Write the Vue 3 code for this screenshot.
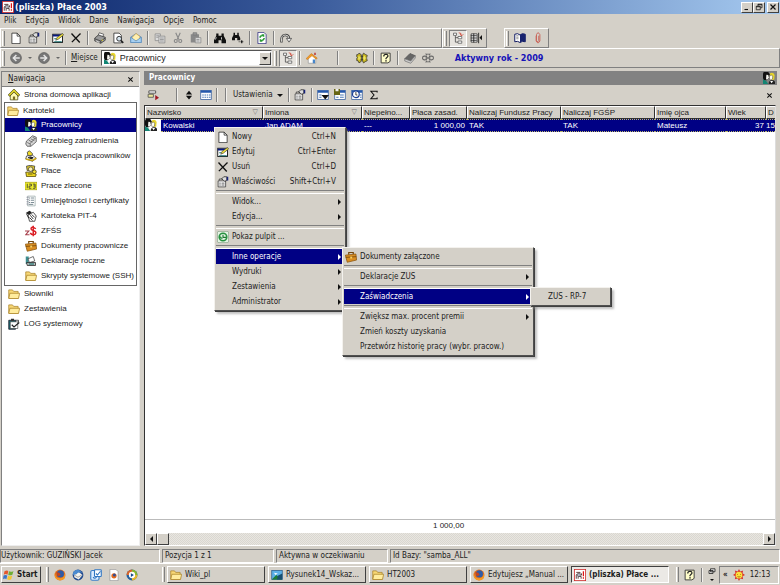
<script setup>
import { ref } from 'vue'

const icons = {
  app: '<rect x=".5" y=".5" width="15" height="15" fill="#fff" stroke="#c22"/><path d="M3 4.500h5l2 2v2M3 13V8l2-2M5.500 13v-3h4v3" fill="none" stroke="#533" stroke-width="1.200"/><circle cx="6.500" cy="8" r="2.200" fill="#b5b5c4" stroke="#444" stroke-width=".8"/><path d="M12.500 3v6.500M12.500 11v2" stroke="#d11" stroke-width="1.600"/>',
  page: '<path d="M2.500 1.500h7l4 4v10h-11z" fill="#fff" stroke="#222"/><path d="M9.500 1.500v4h4" fill="none" stroke="#222"/>',
  props: '<path d="M1.500 6.500h10v8h-10z" fill="#fff" stroke="#333"/><path d="M3 9.500h2M6 9.500h4M3 12h2M6 12h4M3 6V4h5" stroke="#333" fill="none"/><path d="M6 4l3-3h4v5l-3 1-2-2z" fill="#ddd" stroke="#222"/><path d="M13 1h2v5h-2z" fill="#14207a"/>',
  edit: '<rect x="1" y="3" width="13" height="11" fill="#fff" stroke="#111" stroke-width="1.200"/><path d="M1 3.500h13v2.500H1z" fill="#0a1a80"/><path d="M3 13h10M3 9h3" stroke="#197070" stroke-width="1.500"/><path d="M5 11l2-4 7-5 1.500 2-7 5.500z" fill="#f1e23c" stroke="#333" stroke-width=".8"/>',
  del: '<path d="M2 2l11 12M14 2L2.500 13.500" stroke="#111" stroke-width="1.800" fill="none"/>',
  print: '<path d="M5 6l2-5 6 2-2 5z" fill="#fff" stroke="#444"/><path d="M1 8l5-4 9 3v4l-6 4-8-3z" fill="#9a9a9a" stroke="#333"/><path d="M1 9l8 3 6-4M9 12v3" stroke="#333" fill="none"/><path d="M3 12l4 2" stroke="#fff"/><circle cx="11" cy="11" r="1" fill="#e5d636"/>',
  preview: '<path d="M2.500 1.500h7l3 3v10h-10z" fill="#fff" stroke="#222"/><circle cx="9.500" cy="9" r="3.200" fill="#d5e4ee" stroke="#222" stroke-width="1.200"/><path d="M12 11.500l3 3" stroke="#222" stroke-width="2.200"/>',
  mail: '<path d="M1 7l7-5 7 5v7H1z" fill="#6ea4d8" stroke="#5280ae"/><path d="M3 7l5-5 5 4v4l-5 2-5-2z" fill="#fff0b0" stroke="#e0ad4c"/><path d="M1 7l7 5 7-5v7H1z" fill="#a7d0f2" stroke="#5f90bd"/>',
  copy: '<g fill="#ddd" stroke="#888"><path d="M1.500 2.500h7v9h-7z"/><path d="M6.500 5.500h8v9h-8z"/></g><path d="M3 5h4M3 7h3M8 8h5M8 10h5M8 12h5" stroke="#888"/>',
  cut: '<path d="M5 1l4 9M11 1L7 10" stroke="#888" stroke-width="1.500"/><g fill="none" stroke="#888" stroke-width="1.500"><circle cx="5" cy="12" r="2"/><circle cx="11" cy="12" r="2"/></g>',
  paste: '<path d="M1 3h11v11H1z" fill="#888"/><path d="M4 1h5v3H4z" fill="#999" stroke="#777"/><path d="M7 7.500h7.500v7H7z" fill="#ddd" stroke="#888"/><path d="M8.500 10h4M8.500 12h4" stroke="#888"/>',
  bino: '<path d="M3 2h3v3h4V2h3v3l3 6v4h-6v-4H6v4H0v-4l3-6z" fill="#111"/><path d="M3 7l-1 3M10 7v3" stroke="#fff"/>',
  binonext: '<path d="M2 1h2v3h3V1h2v3l2 4v3H7V8H4v3H0V8l2-4z" fill="#111"/><path d="M9 13h1M11.500 13h1M14 13h1M13 11v4" stroke="#111" stroke-width="1.500"/>',
  refresh: '<path d="M2.500 .5h8l3 3v12h-11z" fill="#fff" stroke="#227"/><path d="M4 7q1-3 4-3l-1-1h4v4L9.500 6Q7 5 6 8zM12 8q-1 4-4 4l1 1H5V9l1.500 1Q9 11 10 8z" fill="#2a9b35"/>',
  redo: '<path d="M2 14q-1-10 5-10 5 0 5 5" stroke="#444" stroke-width="3.200" fill="none"/><path d="M2 13q-1-9 5-9 5 0 5 5" stroke="#e8e6e1" stroke-width="1.200" fill="none"/><path d="M8.500 8.500h7l-3.500 5z" fill="#eee" stroke="#444"/>',
  tree: '<path d="M4.500 3v10.500H8M4.500 7.500H9" fill="none" stroke="#444"/><g fill="#fff" stroke="#555"><path d="M2 1.500h4v3H2zM8 6h5v3H8zM8 12h5v3H8z"/></g><path d="M9 1l3 1v3M11 3l2 2 2-2" stroke="#c32" fill="none"/>',
  cols: '<path d="M1.500 2.500h8v11h-8z" fill="#fff" stroke="#222"/><path d="M1 5h8M1 8h8M1 11h8M5 2v12M11.500 1v14" stroke="#222" stroke-width="1.200"/><path d="M16 4v7l-3.500-3.500z" fill="#111"/>',
  book: '<path d="M8 4Q5 1 1 3v10q4-1.500 7 1 3-2.500 7-1V3q-4-2-7 1z" fill="#fff" stroke="#0b1560" stroke-width="1.300"/><path d="M8 4q3-3 7-1v10q-4-1.500-7 1z" fill="#18236e"/><path d="M3 5h3M3 7h3M3 9h3" stroke="#777"/>',
  clip: '<path d="M5.500 5v7q2.500 5 5 0V3.500q-2.500-5-4.500 0v8q2 3 3 0V5" fill="none" stroke="#c8665a" stroke-width="1.300"/>',
  back: '<circle cx="8" cy="8" r="7.200" fill="#777" stroke="#5f5f5f"/><path d="M13 8H5M8.500 4L4.500 8l4 4" stroke="#e5e5e5" stroke-width="2" fill="none"/>',
  fwd: '<circle cx="8" cy="8" r="7.200" fill="#777" stroke="#5f5f5f"/><path d="M3 8h8M7.500 4l4 4-4 4" stroke="#e5e5e5" stroke-width="2" fill="none"/>',
  house: '<path d="M3 8v7h10V8L8 3z" fill="#fff" stroke="#999"/><path d="M0 9l7-7 8 6-1.500 1.500L8 5l-6 5z" fill="#f49b27" stroke="#b86a10" stroke-width=".6"/><path d="M9 10h3v5H9z" fill="#4786c9"/><path d="M11 1h2v3h-2z" fill="#b33"/>',
  bearing: '<g fill="#c4b21c" stroke="#333"><path d="M4 1.500l3 2v9l-3 2-1.500-3H1v-3l1-1-1-1v-3h1.500z"/><path d="M10 1.500l3 2 2 1-1 3.500 1 3.500-2 1-3 2-1.500-3v-7z"/></g><path d="M3 8h11M4 5v6M11 5v6" stroke="#f6ee71" stroke-width="1.300"/><path d="M8 5v6" stroke="#222" stroke-width="1.400"/>',
  help: '<path d="M1.500 1.500h12v11l-3 2h-9z" fill="#fffdc9" stroke="#333" stroke-width="1.200"/><path d="M5 6q0-3 3-3 3 .2 2.500 3L8 8.500v1" stroke="#222" stroke-width="1.600" fill="none"/><path d="M7 11h2v1.800H7z" fill="#222"/>',
  graybook: '<path d="M1 9l7-7 7 3-6 7z" fill="#666" stroke="#555"/><path d="M1 9l8 3 6-7v3l-6 7-8-3z" fill="#ccc" stroke="#777"/>',
  chain: '<g fill="none" stroke="#666" stroke-width="1.400"><rect x=".7" y="5.500" width="6" height="5" rx="2.500"/><rect x="9.300" y="5.500" width="6" height="5" rx="2.500"/><path d="M4.500 8h7M5 2l1.500 2.500M11 2L9.500 4.500M8 2v2M5 14l1.500-2.500M11 14l-1.500-2.500M8 14v-2"/></g>',
  people: '<path d="M1 0h6l2 3-1 5-3 3H1L0 8V2z" fill="#111"/><path d="M4.500 3.500L7 4l.8 3-1.300 2.500-2.500.5z" fill="#f4f4ee"/><path d="M0 10l4 1.500 3 4.500H0z" fill="#138573"/><path d="M9.500 1.500Q14 0 15.500 4l-.5 6-3 1-3-6z" fill="#e6d52d"/><path d="M9 4.500q3-1 4 1l-.5 4-2.500 1.500-1.500-3z" fill="#fffef0" stroke="#333" stroke-width=".6"/><path d="M7.500 16q0-4 3.500-5h3l2 2v3z" fill="#222"/><path d="M9.500 12l2 3 2-3z" fill="#fff"/>',
  yhouse: '<path d="M3 8v6.500h10V8L8 3z" fill="#fffbb5" stroke="#4d4a10"/><path d="M1 9l7-7 7 7" fill="none" stroke="#4d4a10" stroke-width="3.400"/><path d="M1.500 8.500L8 2l6.500 6.500" fill="none" stroke="#f3e62d" stroke-width="1.800"/><path d="M6.500 10h3v4.500h-3z" fill="#7a6e21"/>',
  folder: '<path d="M1 2.500h5l1.500 2h6v9H1z" fill="#f8d876" stroke="#a98225"/><path d="M1 14l1.500-7H15.500L14 14z" fill="#ffec9e" stroke="#a98225"/>',
  phone: '<path d="M1 12l1-4 8-7 5 2v6l-7 6H3z" fill="#d8d8d8" stroke="#444"/><path d="M5 7l5 2.500M7.500 5l5 2.500M3 10l4 2M10 3l4 2M7 15V11l7-7" stroke="#555" fill="none"/>',
  attend: '<path d="M3 3l3-2 4 4-1 4-5-1z" fill="#f0da29" stroke="#333"/><path d="M2 8l8-1 5 4-5 4-9-3z" fill="#fff" stroke="#333"/><path d="M4 10l6 2M6 9l5 1.500" stroke="#111" stroke-width="1.500"/><path d="M1 12l9 2 5-3" stroke="#caa715" stroke-width="2" fill="none"/>',
  money: '<path d="M2 1.500l5-1 6 1-1 6H3z" fill="#e0ca2a" stroke="#333"/><circle cx="7.500" cy="5.500" r="3" fill="#fff3b0" stroke="#444"/><path d="M1 9.500h9l5 3-1 3H2z" fill="#ebd51f" stroke="#403809"/><path d="M4 12h6" stroke="#403809"/><circle cx="12.500" cy="9" r="2.500" fill="#f6e337" stroke="#403809"/>',
  onetwo: '<rect x="0" y="3" width="16" height="10" fill="#f1f02c" stroke="#a7a015"/><path d="M3 5v6M5.500 5.500h3V8h-3v3h3M10.500 5.500h3V11h-3M11 8h2.500" stroke="#333" stroke-width="1.100" fill="none"/>',
  cert: '<path d="M3.500 1.500h10v13h-10z" fill="#fff" stroke="#9aa"/><path d="M5 4h2M8 4h4M5 7h2M8 7h4M5 10h2M8 10h4M5 12.500h6" stroke="#6d8089" stroke-width="1.200"/><path d="M2 3h3M2 6h3M2 9h3M2 12h3" stroke="#889"/>',
  pit: '<path d="M1 4l5-3 3 2-3 4z" fill="#222"/><path d="M4 7l7-4 4 5-2 7H6z" fill="#fff" stroke="#222"/><path d="M7 7l4 5M9 6l4 4M6 10l4 4M2 5l3 6" stroke="#222" stroke-width="1.200"/>',
  dollar: '<path d="M0 8h5L1 13h5" stroke="#a8434f" stroke-width="1.600" fill="none"/><path d="M14.500 5q-6-4-6.500 0c0 3 7 2 6.500 5.500-.5 3.500-6 3-7.500 0M11 1v14" stroke="#db1f26" stroke-width="2" fill="none"/>',
  bag: '<path d="M5 5V2h6v3" fill="none" stroke="#71460b" stroke-width="1.600"/><path d="M.5 5.500l14-1.500 1 8-12.500 3z" fill="#d98d20" stroke="#8b5510"/><path d="M1 8.500l14-1" stroke="#7b4b0b" stroke-width="1.200"/><path d="M7 7.500h2.500V10H7z" fill="#f6d365"/>',
  decl: '<path d="M1 2h4v10H1z" fill="#3c8e90"/><path d="M4 5l7-3 2 6-7 2z" fill="#fff" stroke="#444"/><path d="M2 10h12v4H3z" fill="#bbb" stroke="#222"/><path d="M5 12h7" stroke="#17726f" stroke-width="1.500"/>',
  log: '<path d="M1 3h9v12H1z" fill="#1b6e75" stroke="#112"/><path d="M3 5h10v9H3z" fill="#fff" stroke="#333" stroke-width=".8"/><path d="M4 1h4v3H4z" fill="#333"/><path d="M5 9l3 3 7-6" stroke="#222" stroke-width="1.600" fill="none"/><path d="M10 3h4v3" stroke="#222" fill="none"/>',
  gridrun: '<path d="M2.500 2.500h9v3h-9z" fill="#fff" stroke="#333"/><path d="M1.500 7h7v4h-7z" fill="#efeb9b" stroke="#444"/><path d="M11 8v7l5-3.500z" fill="#a01822"/>',
  updown: '<path d="M8 1l5 6H3zM8 15L3 9h10z" fill="#111"/>',
  grid: '<rect x="1" y="2" width="14" height="12" fill="#fff" stroke="#315a9b"/><path d="M1 2h14v3H1z" fill="#2458ad"/><path d="M3 8h2M6 8h2M9 8h2M12 8h2M3 11h2M6 11h2M9 11h2M12 11h2" stroke="#4b78b5" stroke-width="1.500"/>',
  griddown: '<rect x="1" y="2" width="14" height="12" fill="#fff" stroke="#315a9b"/><path d="M1 2h14v3H1z" fill="#2458ad"/><path d="M3 8h3M3 11h3" stroke="#4b78b5" stroke-width="1.500"/><path d="M6 8h10l-5 6z" fill="#111"/>',
  gridsave: '<rect x="1" y="2" width="14" height="12" fill="#fff" stroke="#315a9b"/><path d="M6 2h9v3H6z" fill="#2458ad"/><path d="M8 8h5M8 11h5M3 11h3" stroke="#4b78b5" stroke-width="1.500"/><path d="M0 0h8v8H0z" fill="#666514"/><path d="M2 0h4v3H2z" fill="#eee"/>',
  gridlens: '<rect x="1" y="2" width="14" height="12" fill="#fff" stroke="#315a9b"/><path d="M1 2h14v3H1z" fill="#2458ad"/><path d="M12 8h2M12 11h2" stroke="#4b78b5" stroke-width="1.500"/><circle cx="6.500" cy="7" r="4.500" fill="#fff" stroke="#1d3f94" stroke-width="1.600"/><path d="M6.500 4v4h2" stroke="#111" fill="none"/>',
  sigma: '<path d="M13 4V2H3l5 6-5 6h10v-2" fill="none" stroke="#111" stroke-width="1.700"/>',
  firefox: '<circle cx="8" cy="8" r="7.300" fill="#e4701c"/><circle cx="8.500" cy="6.500" r="4.800" fill="#2f5ca8"/><path d="M1 5q1 9 9 7 4-1 4-6 3 9-6 9Q0 15 1 5z" fill="#f59a24"/><path d="M3 4l4 1 2 3-4 2z" fill="#c8441b"/>',
  bird: '<circle cx="8" cy="8" r="7.200" fill="#234a8d"/><path d="M3 7l6-3 5 4-5 6-6-3z" fill="#f3f3ee"/><path d="M1 8q0-7 8-7l5 4q-6-2-8 2z" fill="#4b8bd0"/><path d="M3 8l5 3 5-3" stroke="#888" fill="none"/>',
  outlook: '<rect x="1" y="2" width="11" height="13" rx="2" fill="#dcecff" stroke="#3c7fc8" stroke-width="1.500"/><rect x="6" y="1" width="9" height="9" rx="1" fill="#fff" stroke="#2f75c2" stroke-width="1.500"/><path d="M8 6l2 2 4-5M4 11q3 3 5-1" stroke="#2f75c2" stroke-width="1.500" fill="none"/>',
  htm: '<path d="M2.500 .5h8l3 3v12h-11z" fill="#fff" stroke="#999"/><circle cx="8" cy="9" r="3.500" fill="#e66b1c"/><circle cx="8.500" cy="8" r="2" fill="#304f99"/>',
  media: '<circle cx="8" cy="8" r="7.300" fill="#235f9e"/><path d="M8 8V.7A7.300 7.300 0 0 1 15.300 8z" fill="#86b532"/><path d="M8 8h7.300A7.300 7.300 0 0 1 8 15.300z" fill="#e9b52a"/><path d="M8 8H.7A7.300 7.300 0 0 1 8 .7z" fill="#d8652a"/><circle cx="8" cy="8" r="4.200" fill="#fff"/><path d="M6.500 5.500v5l4-2.500z" fill="#164a8a"/>',
  pic: '<rect x="1" y="2" width="14" height="12" fill="#5db1e8" stroke="#285c8a"/><path d="M1 14l6-6 8 6z" fill="#1f7d35"/><path d="M4 5l5 1-3 2z" fill="#fff"/><path d="M9 9l6-3v8H8z" fill="#184e70"/>',
  flag: '<path d="M2 3q3-2 5-.5L6 7.500Q3.500 6 1 7.500z" fill="#e4572b"/><path d="M8 3q3 1.500 6-.5L12.500 7.500Q9.500 9 7 8z" fill="#6fae35"/><path d="M.7 8.800q2.500-1.500 5 0L4.500 13.500Q2.500 12 0 13.500z" fill="#3973c6"/><path d="M6.800 9q3 1.500 5.500-.3L11 13.700q-3 1.800-5.500 0z" fill="#f3c631"/>',
  windows: '<path d="M5 1.500h9v6H5zM2 5h8v6H2z" fill="#ddd" stroke="#222" stroke-width="1.600"/>',
  sun: '<path d="M8 0l1.700 3.200L13.500 2l-.8 3.800L16 8l-3.300 1.800.8 3.900-3.800-1.100L8 16l-1.700-3.400-3.800 1.100.8-3.900L0 8l3.300-2.200L2.500 2l3.800 1.200z" fill="#d9342b"/><circle cx="8" cy="8" r="4.500" fill="#fae13b"/><path d="M6 7v1M10 7v1M6 10q2 1.500 4 0" stroke="#9b4812" fill="none"/>',
  desk: '<rect x=".5" y=".5" width="15" height="15" rx="2" fill="#e5f3e5" stroke="#8aa58a"/><circle cx="8" cy="8" r="5" fill="none" stroke="#289240" stroke-width="2.200"/><path d="M8 5v3.500h4" stroke="#207733" stroke-width="1.500" fill="none"/><path d="M2 9l3-2 3 4z" fill="#289240"/>',
  min: '<path d="M3 13h7" stroke="#111" stroke-width="2.200"/>',
  restore: '<path d="M6 2.500h8v7h-3M6 2v4M2.500 6.500h8v7h-8zM6 3.500h8M2.500 7.500h8" fill="none" stroke="#111" stroke-width="1.500"/>',
  close: '<path d="M3 3l10 10M13 3L3 13" stroke="#111" stroke-width="2.400"/>'
}

const menus = ['Plik', 'Edycja', 'Widok', 'Dane', 'Nawigacja', 'Opcje', 'Pomoc']

const mainTools = [
  ['page', 'Nowy'], ['props', 'Właściwości'], null,
  ['edit', 'Edytuj'], ['del', 'Usuń'], null,
  ['print', 'Drukuj'], ['preview', 'Podgląd'], ['mail', 'Wyślij'], null,
  ['copy', 'Kopiuj'], ['cut', 'Wytnij'], ['paste', 'Wklej'], null,
  ['bino', 'Szukaj'], ['binonext', 'Szukaj dalej'], null,
  ['refresh', 'Odśwież'], null, ['redo', 'Ponów']
]

const files = [
  ['people', 'Pracownicy'], ['phone', 'Przebieg zatrudnienia'], ['attend', 'Frekwencja pracowników'],
  ['money', 'Płace'], ['onetwo', 'Prace zlecone'], ['cert', 'Umiejętności i certyfikaty'],
  ['pit', 'Kartoteka PIT-4'], ['dollar', 'ZFŚS'], ['bag', 'Dokumenty pracownicze'],
  ['decl', 'Deklaracje roczne'], ['folder', 'Skrypty systemowe (SSH)']
]
const tail = [['folder', 'Słowniki'], ['folder', 'Zestawienia'], ['log', 'LOG systemowy']]

const columns = [
  { t: 'Nazwisko', w: 118, sort: true }, { t: 'Imiona', w: 99, sort: true }, { t: 'Niepełno...', w: 48 },
  { t: 'Płaca zasad.', w: 57 }, { t: 'Naliczaj Fundusz Pracy', w: 94 }, { t: 'Naliczaj FGŚP', w: 94 },
  { t: 'Imię ojca', w: 71 }, { t: 'Wiek', w: 40 }, { t: 'D' }
]

const tasks = [
  ['folder', 'Wiki_pl'], ['pic', 'Rysunek14_Wskaz...'], ['folder', 'HT2003'],
  ['firefox', 'Edytujesz „Manual ...'], ['app', '(pliszka)  Płace ...']
]

const place = ref('Pracownicy')
const current = ref('Pracownicy')
</script>

<template>
  <div class="window">
    <header class="title">
      <svg class="ic" viewBox="0 0 16 16" v-html="icons.app" />
      <h1>(pliszka) Płace 2003</h1>
      <button class="cap" aria-label="Minimalizuj"><svg viewBox="0 0 16 16" v-html="icons.min" /></button>
      <button class="cap" aria-label="Przywróć"><svg viewBox="0 0 16 16" v-html="icons.restore" /></button>
      <button class="cap last" aria-label="Zamknij"><svg viewBox="0 0 16 16" v-html="icons.close" /></button>
    </header>

    <nav class="menubar">
      <button v-for="m in menus" :key="m">{{ m }}</button>
    </nav>

    <div class="toolrow">
      <div class="bar wide">
        <i class="grip" />
        <template v-for="(t, i) in mainTools" :key="i">
          <button v-if="t" class="tool" :aria-label="t[1]"><svg class="ic" viewBox="0 0 16 16" v-html="icons[t[0]]" /></button>
          <i v-else class="sep" />
        </template>
      </div>
      <div class="bar">
        <i class="grip" />
        <button class="tool on" aria-label="Drzewo"><svg class="ic" viewBox="0 0 16 16" v-html="icons.tree" /></button>
        <button class="tool" aria-label="Kolumny"><svg class="ic" viewBox="0 0 16 16" v-html="icons.cols" /></button>
      </div>
      <div class="bar apart">
        <i class="grip" />
        <button class="tool" aria-label="Książka"><svg class="ic" viewBox="0 0 16 16" v-html="icons.book" /></button>
        <button class="tool" aria-label="Załącznik"><svg class="ic" viewBox="0 0 16 16" v-html="icons.clip" /></button>
      </div>
    </div>

    <div class="toolrow">
      <div class="bar full">
        <i class="grip" />
        <button class="tool" aria-label="Wstecz"><svg class="ic" viewBox="0 0 16 16" v-html="icons.back" /></button>
        <i class="drop" />
        <button class="tool" aria-label="Dalej"><svg class="ic" viewBox="0 0 16 16" v-html="icons.fwd" /></button>
        <i class="drop" />
        <i class="sep" />
        <label for="place"><u>M</u>iejsce</label>
        <div class="combo">
          <svg class="ic" viewBox="0 0 16 16" v-html="icons.people" />
          <select id="place" v-model="place"><option>Pracownicy</option></select>
          <span class="combo-btn"><i class="down" /></span>
        </div>
        <i class="grip" />
        <button class="tool on" aria-label="Drzewo nawigacji"><svg class="ic" viewBox="0 0 16 16" v-html="icons.tree" /></button>
        <i class="sep" />
        <button class="tool" aria-label="Strona domowa"><svg class="ic" viewBox="0 0 16 16" v-html="icons.house" /></button>
        <i class="sep broad" />
        <button class="tool" aria-label="Wyszukaj"><svg class="ic" viewBox="0 0 16 16" v-html="icons.bearing" /></button>
        <i class="sep" />
        <button class="tool" aria-label="Pomoc"><svg class="ic" viewBox="0 0 16 16" v-html="icons.help" /></button>
        <i class="sep" />
        <button class="tool" aria-label="Słownik"><svg class="ic" viewBox="0 0 16 16" v-html="icons.graybook" /></button>
        <button class="tool" aria-label="Powiązania"><svg class="ic" viewBox="0 0 16 16" v-html="icons.chain" /></button>
        <strong class="year">Aktywny rok - 2009</strong>
      </div>
    </div>

    <main class="work">
      <aside class="side">
        <div class="side-head">
          <h2><u>N</u>awigacja</h2>
          <button class="x" aria-label="Zamknij nawigację"><svg viewBox="0 0 16 16" v-html="icons.close" /></button>
        </div>
        <div class="tree">
          <a href="#" class="node"><svg class="ic" viewBox="0 0 16 16" v-html="icons.yhouse" />Strona domowa aplikacji</a>
          <div class="group">
            <a href="#" class="node"><svg class="ic" viewBox="0 0 16 16" v-html="icons.folder" />Kartoteki</a>
            <a v-for="f in files" :key="f[1]" href="#" class="node child" :class="{ sel: f[1] === current }" @click.prevent="current = f[1]">
              <svg class="ic" viewBox="0 0 16 16" v-html="icons[f[0]]" />{{ f[1] }}
            </a>
          </div>
          <a v-for="f in tail" :key="f[1]" href="#" class="node"><svg class="ic" viewBox="0 0 16 16" v-html="icons[f[0]]" />{{ f[1] }}</a>
        </div>
      </aside>

      <section class="content">
        <div class="content-head">
          <h2>Pracownicy</h2>
          <svg class="ic" viewBox="0 0 16 16" v-html="icons.people" />
        </div>
        <div class="content-tools">
          <button class="tool" aria-label="Wykonaj"><svg class="ic" viewBox="0 0 16 16" v-html="icons.gridrun" /></button>
          <i class="sep far" />
          <button class="tool" aria-label="Sortuj"><svg class="ic slim" viewBox="0 0 16 16" v-html="icons.updown" /></button>
          <button class="tool" aria-label="Tabela"><svg class="ic" viewBox="0 0 16 16" v-html="icons.grid" /></button>
          <i class="sep" /><i class="sep second-sep" />
          <button class="settings">Ustawienia <i class="down" /></button>
          <i class="sep" />
          <button class="tool" aria-label="Właściwości"><svg class="ic" viewBox="0 0 16 16" v-html="icons.props" /></button>
          <i class="sep" />
          <button class="tool" aria-label="Widok tabeli"><svg class="ic" viewBox="0 0 16 16" v-html="icons.griddown" /></button>
          <button class="tool" aria-label="Zapisz widok"><svg class="ic" viewBox="0 0 16 16" v-html="icons.gridsave" /></button>
          <button class="tool" aria-label="Filtr"><svg class="ic" viewBox="0 0 16 16" v-html="icons.gridlens" /></button>
          <button class="tool" aria-label="Suma"><svg class="ic slim" viewBox="0 0 16 16" v-html="icons.sigma" /></button>
          <button class="x" aria-label="Zamknij widok"><svg viewBox="0 0 16 16" v-html="icons.close" /></button>
        </div>
        <div class="grid">
          <table>
            <colgroup><col v-for="c in columns" :key="c.t" :style="c.w ? { width: c.w + 'px' } : null"></colgroup>
            <thead>
              <tr>
                <th v-for="c in columns" :key="c.t"><div class="th">{{ c.t }}<span v-if="c.sort" class="tri">▽</span></div></th>
              </tr>
            </thead>
            <tbody>
              <tr>
                <td class="first"><div class="who"><svg class="ic" viewBox="0 0 16 16" v-html="icons.people" /><span>Kowalski</span></div></td>
                <td>Jan ADAM</td><td>---</td><td class="num">1 000,00</td><td>TAK</td><td>TAK</td><td>Mateusz</td><td class="num">37</td><td class="tight">15</td>
              </tr>
            </tbody>
          </table>
          <div class="sum">1 000,00</div>
          <div class="scroll">
            <button aria-label="Przewiń w lewo"><i class="left" /></button><i class="thumb" />
            <button class="end" aria-label="Przewiń w prawo"><i class="right" /></button>
          </div>
        </div>
      </section>
    </main>

    <footer class="status">
      <span class="p1">Użytkownik: GUZIŃSKI Jacek</span><span class="p2">Pozycja 1 z 1</span><span class="p2">Aktywna w oczekiwaniu</span><span class="p3">Id Bazy: "samba_ALL"</span>
    </footer>

    <div class="taskbar">
      <button class="start"><svg class="ic" viewBox="0 0 16 16" v-html="icons.flag" />Start</button>
      <i class="grip" />
      <div class="quick">
        <button v-for="q in ['firefox', 'bird', 'outlook', 'htm', 'media']" :key="q" class="tool" :aria-label="q"><svg class="ic" viewBox="0 0 16 16" v-html="icons[q]" /></button>
      </div>
      <i class="grip" />
      <div class="tasks">
        <button v-for="(t, i) in tasks" :key="t[1]" class="task" :class="{ active: i === 4 }"><svg class="ic" viewBox="0 0 16 16" v-html="icons[t[0]]" /><span>{{ t[1] }}</span></button>
      </div>
      <i class="grip" />
      <button class="tool" aria-label="Pomoc"><svg class="ic" viewBox="0 0 16 16" v-html="icons.help" /></button>
      <i class="sep" />
      <button class="lang" aria-label="Pasek języka"><svg viewBox="0 0 16 16" v-html="icons.windows" /><i class="down" /></button>
      <div class="tray"><b>«</b><svg class="ic" viewBox="0 0 16 16" v-html="icons.sun" /><time>12:13</time></div>
    </div>

    <ul class="menu root">
      <li><svg class="ic" viewBox="0 0 16 16" v-html="icons.page" /><button>Nowy<kbd>Ctrl+N</kbd></button></li>
      <li><svg class="ic" viewBox="0 0 16 16" v-html="icons.edit" /><button>Edytuj<kbd>Ctrl+Enter</kbd></button></li>
      <li><svg class="ic" viewBox="0 0 16 16" v-html="icons.del" /><button>Usuń<kbd>Ctrl+D</kbd></button></li>
      <li><svg class="ic" viewBox="0 0 16 16" v-html="icons.props" /><button>Właściwości<kbd>Shift+Ctrl+V</kbd></button></li>
      <li class="rule" />
      <li><button>Widok...</button><i class="right" /></li>
      <li><button>Edycja...</button><i class="right" /></li>
      <li class="rule" />
      <li><svg class="ic" viewBox="0 0 16 16" v-html="icons.desk" /><button>Pokaz pulpit ...</button></li>
      <li class="rule" />
      <li class="open">
        <button>Inne operacje</button><i class="right" />
        <ul class="menu sub second">
          <li><svg class="ic" viewBox="0 0 16 16" v-html="icons.bag" /><button>Dokumenty załączone</button></li>
          <li class="rule" />
          <li><button>Deklaracje ZUS</button><i class="right" /></li>
          <li class="rule" />
          <li class="open">
            <button>Zaświadczenia</button><i class="right" />
            <ul class="menu sub third"><li><button>ZUS - RP-7</button></li></ul>
          </li>
          <li class="rule" />
          <li><button>Zwiększ max. procent premii</button><i class="right" /></li>
          <li><button>Zmień koszty uzyskania</button></li>
          <li><button>Przetwórz historię pracy (wybr. pracow.)</button></li>
        </ul>
      </li>
      <li><button>Wydruki</button><i class="right" /></li>
      <li><button>Zestawienia</button><i class="right" /></li>
      <li><button>Administrator</button><i class="right" /></li>
    </ul>
  </div>
</template>

<style>
body { margin: 0; background: #d4d0c8; }
</style>

<style scoped>
* { box-sizing: border-box; }
.window {
  --face: #d4d0c8;
  --dark: #808080;
  --navy: #000084;
  --ui: "DejaVu Sans Condensed", "DejaVu Sans", sans-serif;
  --grid: "Liberation Sans", Arial, sans-serif;
  position: relative;
  display: flex;
  flex-direction: column;
  height: 100vh;
  overflow: hidden;
  background: var(--face);
  font: 8px/12px var(--ui);
  color: #1c1c1c;
}
button, select { font: inherit; color: inherit; border: 0; padding: 0; margin: 0; background: none; }
h1, h2 { margin: 0; font-size: inherit; font-weight: bold; }
svg { display: block; flex: none; }
.ic { width: 12px; height: 12px; }
.ic.slim { width: 10px; height: 10px; }
u { text-underline-offset: 1px; }

.title {
  display: flex;
  align-items: center;
  height: 14px;
  padding: 0 1px 0 2px;
  background: linear-gradient(90deg, #0a246a, #3b5c9c 40%, #a6caf0);
  color: #fff;
}
.title h1 { flex: 1; padding-left: 1px; font-size: 9px; }
.cap { width: 12px; height: 11px; display: grid; place-items: center; background: var(--face); border: 1px solid; border-color: #fff #404040 #404040 #fff; }
.cap svg { width: 8px; height: 8px; }
.cap.last { margin-left: 2px; }

.menubar { display: flex; gap: 9px; height: 14px; padding-left: 4px; }

.toolrow { display: flex; height: 20px; }
.bar { display: flex; align-items: center; border: 1px solid; border-color: #fff #808080 #808080 #fff; padding: 0 1px; }
.bar.wide { width: 442px; }
.bar.apart { margin-left: 17px; }
.bar.full { flex: 1; }
.grip { flex: none; width: 3px; height: 15px; margin-right: 2px; border-left: 1px solid #fff; border-right: 1px solid var(--dark); }
.sep { flex: none; width: 2px; height: 14px; margin: 0 2px; border-left: 1px solid var(--dark); border-right: 1px solid #f2f0ec; }
.sep.broad { margin: 0 14px 0 16px; }
.sep.far { margin: 0 2px 0 15px; }
.sep.second-sep { margin-left: 5px; }
.tool { flex: none; width: 18px; height: 17px; display: grid; place-items: center; }
.tool.on { background: #e6e3de; border: 1px solid; border-color: #808080 #fff #fff #808080; }
.down { display: inline-block; flex: none; border: 3px solid transparent; border-top-color: #111; border-bottom: 0; }
.drop { flex: none; width: 4px; margin: 0 3px; border: 2px solid transparent; border-top-color: #666; border-bottom: 0; }
label { font-family: var(--ui); margin: 0 3px 0 2px; }
.combo { display: flex; align-items: center; gap: 4px; width: 171px; height: 16px; margin-right: 2px; padding-left: 2px; background: #fff; border: 1px solid; border-color: #555 #eee #eee #555; }
.combo select { flex: 1; appearance: none; outline: 0; font-family: var(--grid); font-size: 9px; }
.combo-btn { display: grid; place-items: center; width: 12px; height: 13px; background: var(--face); border: 1px solid; border-color: #fff #404040 #404040 #fff; }
.year { margin-left: 18px; font-size: 9px; color: #1612b8; }

.work { flex: 1; display: flex; gap: 4px; min-height: 0; padding: 3px 3px 3px 1px; }
.side { flex: none; width: 139px; display: flex; flex-direction: column; background: #fff; border: 1px solid; border-color: var(--dark) #eee #eee var(--dark); font-family: var(--grid); }
.side-head { display: flex; justify-content: space-between; align-items: center; height: 15px; padding: 0 4px 0 6px; background: var(--face); border-bottom: 1px solid var(--dark); }
.side-head h2 { font-weight: normal; font-family: var(--ui); }
.x { width: 8px; height: 8px; }
.x svg { width: 7px; height: 7px; }
.tree { padding: 0 2px; }
.node { display: flex; align-items: center; gap: 4px; height: 15px; padding-left: 4px; color: inherit; text-decoration: none; white-space: nowrap; }
.group { border: 1px solid #666; padding: 0 0 2px; }
.group .node { padding-left: 2px; }
.group .child { padding-left: 20px; }
.child.sel { background: var(--navy); color: #fff; height: 14px; margin-bottom: 1px; }

.content { flex: 1; min-width: 0; display: flex; flex-direction: column; }
.content-head { display: flex; justify-content: space-between; align-items: center; height: 14px; padding: 0 2px 0 5px; background: #828282; color: #fff; }
.content-head h2 { font-family: var(--ui); }
.content-tools { display: flex; align-items: center; height: 20px; }
.content-tools .tool { width: 17px; }
.content-tools .x { margin-left: auto; margin-right: 3px; }
.settings { display: flex; align-items: center; gap: 4px; margin: 0 3px 0 4px; }
.grid { flex: 1; display: flex; flex-direction: column; margin-right: 1px; background: #fff; border: 1px solid; border-color: #333 #ddd #fff #333; font-family: var(--grid); }
table { width: 100%; table-layout: fixed; border-collapse: separate; border-spacing: 0; }
th, td { padding: 0; overflow: hidden; white-space: nowrap; text-align: left; font-weight: normal; }
th { height: 13px; background: var(--face); border-right: 1px solid #333; border-bottom: 1px solid #333; border-top: 1px solid #fff; border-left: 1px solid #fff; }
th:last-child { border-right: 0; }
.th { display: flex; justify-content: space-between; padding: 0 4px 0 1px; line-height: 11px; }
th:last-child .th { padding-right: 0; }
.tri { color: #777; font: 7px/11px "DejaVu Sans", sans-serif; }
td { height: 13px; padding: 0 2px; background: var(--navy); color: #fff; line-height: 11px; border-top: 1px dotted #b8b46a; border-bottom: 1px dotted #b8b46a; }
td.tight { padding: 0; }
td.first { padding: 0; border: 0; background: #fff; }
.who { display: flex; gap: 4px; }
.who span { flex: 1; padding-left: 2px; background: var(--navy); border-top: 1px dotted #b8b46a; border-bottom: 1px dotted #b8b46a; line-height: 11px; }
.num { text-align: right; }
.sum { margin-top: auto; height: 14px; padding-left: 288px; border-top: 1px solid #bbb; }
.scroll { display: flex; height: 12px; background: repeating-conic-gradient(#e8e6e1 0 25%, #dad7d0 0 50%) 0 0 / 2px 2px; }
.scroll button, .thumb { width: 12px; height: 12px; display: grid; place-items: center; background: var(--face); border: 1px solid; border-color: #fff #404040 #404040 #fff; }
.scroll .end { margin-left: auto; }
.left { border: 3px solid transparent; border-right-color: #111; border-left: 0; }
.right { border: 3px solid transparent; border-left-color: #111; border-right: 0; }

.status { display: flex; gap: 2px; height: 14px; }
.status span { padding-left: 2px; border: 1px solid; border-color: var(--dark) #fff #fff var(--dark); white-space: nowrap; }
.p1 { width: 160px; }
.status .p1 { padding-left: 0; }
.p2 { width: 112px; }
.p3 { flex: 1; }

.taskbar { display: flex; align-items: center; height: 22px; padding: 0 1px; border-top: 1px solid #fff; }
.start { display: flex; align-items: center; gap: 2px; width: 40px; height: 17px; padding-left: 1px; margin-right: 5px; font-weight: bold; border: 1px solid; border-color: #fff #404040 #404040 #fff; }
.quick { display: flex; width: 111px; }
.tasks { flex: 1; min-width: 0; display: flex; gap: 3px; margin-right: 7px; }
.task { flex: 1 1 0; min-width: 0; display: flex; align-items: center; gap: 3px; height: 17px; padding: 0 2px; white-space: nowrap; overflow: hidden; border: 1px solid; border-color: #fff #404040 #404040 #fff; }
.task.active { font-weight: bold; background: #ebe9e5; border-color: #404040 #fff #fff #404040; }
.lang { display: grid; justify-items: center; gap: 3px; width: 14px; }
.lang svg { width: 8px; height: 8px; }
.lang .down { border-width: 2px 2px 0; }
.tray { display: flex; align-items: center; gap: 5px; width: 60px; height: 18px; padding-left: 3px; border: 1px solid; border-color: var(--dark) #fff #fff var(--dark); }

.menu { position: absolute; margin: 0; padding: 1px; list-style: none; background: var(--face); border: 1px solid; border-color: #f4f2ee #505050 #505050 #f4f2ee; box-shadow: 1px 1px 0 #404040, 3px 3px 2px #8888; }
.root { left: 214px; top: 127px; width: 132px; }
.sub { left: calc(100% - 2px); top: -2px; }
.second { width: 192px; }
.third { width: 81px; }
.menu li { position: relative; display: flex; align-items: center; height: 15px; padding-left: 16px; }
.menu li > .ic { margin: 0 3px 0 -15px; }
.menu button { flex: 1; display: flex; justify-content: space-between; padding-right: 8px; white-space: nowrap; text-align: left; }
.menu kbd { font: inherit; }
.menu li > .right { margin-right: 3px; }
.menu li > button:has(+ .right) { padding-right: 0; }
.menu li.open { background: var(--navy); color: #fff; }
.menu li.open > .right { border-left-color: #fff; }
.menu .sub { color: #1c1c1c; }
.menu li.rule { height: 5px; padding: 0; }
.menu li.rule::after { content: ""; flex: 1; height: 2px; border-top: 1px solid var(--dark); border-bottom: 1px solid #fff; }
</style>
